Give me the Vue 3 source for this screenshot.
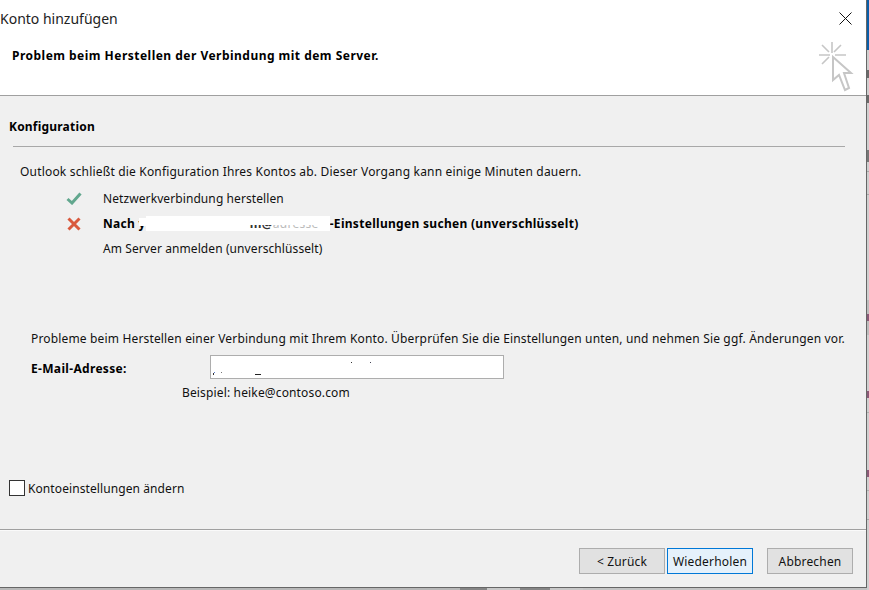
<script setup>
const steps = [
  { id: 'ok', text: 'Netzwerkverbindung herstellen' },
  { id: 'fail' },
  { id: 'none', text: 'Am Server anmelden (unverschlüsselt)' }
]
const backdropMarks = [
  { y: 70, h: 8, c: '#6a6a6a' },
  { y: 95, h: 8, c: '#6a6a6a' },
  { y: 150, h: 12, c: '#777777' },
  { y: 171, h: 1, c: '#a8a8a8' },
  { y: 194, h: 1, c: '#a8a8a8' },
  { y: 314, h: 7, c: '#8a5a78' },
  { y: 391, h: 7, c: '#8a5a78' },
  { y: 412, h: 1, c: '#b0b0b0' },
  { y: 470, h: 7, c: '#8a5a78' },
  { y: 490, h: 1, c: '#b0b0b0' },
  { y: 519, h: 1, c: '#a8a8a8' }
]
</script>

<template>
  <div class="screen">
    <div class="dialog">
      <header class="head">
        <div class="head-text">
          <div class="title">Konto hinzufügen</div>
          <div class="subtitle">Problem beim Herstellen der Verbindung mit dem Server.</div>
        </div>
        <div class="head-icons">
          <svg class="close" width="13" height="13" viewBox="0 0 13 13">
            <path d="M0.5 0.5 L12.5 12.5 M12.5 0.5 L0.5 12.5" stroke="#111" stroke-width="1" fill="none" />
          </svg>
          <svg class="cursor" width="36" height="52" viewBox="818 41 36 52">
            <path d="M832 42V53M819 55H830M835 55H846M822 45L829 52M841 45L834 52M822 64L829 57" stroke="#c6c6c6" stroke-width="1.6" fill="none" />
            <path d="M833 57V80L839 75L845 90L849 88L844 73L851 73Z" stroke="#c6c6c6" stroke-width="2" fill="#fff" stroke-linejoin="miter" />
          </svg>
        </div>
      </header>

      <main class="body">
        <h2 class="section">Konfiguration</h2>
        <div class="rule"></div>
        <p class="intro">Outlook schließt die Konfiguration Ihres Kontos ab. Dieser Vorgang kann einige Minuten dauern.</p>

        <ul class="steps">
          <li v-for="s in steps" :key="s.id" class="step" :class="s.id">
            <span class="step-icon">
              <svg v-if="s.id === 'ok'" width="16" height="13" viewBox="0 0 16 13">
                <path d="M1.5 7 L6 11 L14.5 1.5" stroke="#62a78e" stroke-width="3" fill="none" />
              </svg>
              <svg v-else-if="s.id === 'fail'" class="fail-icon" width="14" height="14" viewBox="0 0 14 14">
                <path d="M1.5 1.5 L12.5 12.5 M12.5 1.5 L1.5 12.5" stroke="#d9593d" stroke-width="3" fill="none" />
              </svg>
            </span>
            <span v-if="s.text" class="step-text">{{ s.text }}</span>
            <span v-else class="step-text strong">Nach <span class="frag">y</span><span class="blank"><span class="remnant">m@</span><span class="remnant faint">adresse</span></span>-Einstellungen suchen (unverschlüsselt)</span>
          </li>
        </ul>

        <p class="problem">Probleme beim Herstellen einer Verbindung mit Ihrem Konto. Überprüfen Sie die Einstellungen unten, und nehmen Sie ggf. Änderungen vor.</p>

        <div class="form-row">
          <label class="form-label">E-Mail-Adresse:</label>
          <div class="input">
            <svg width="292" height="22" viewBox="0 0 292 22">
              <rect x="2" y="17" width="1" height="2" fill="#333" />
              <rect x="3" y="16" width="1" height="1" fill="#5a7fd0" />
              <rect x="10" y="16" width="1" height="1" fill="#777" />
              <rect x="44" y="18" width="6" height="1" fill="#222" />
              <rect x="140" y="6" width="1" height="1" fill="#333" />
              <rect x="159" y="6" width="1" height="1" fill="#445" />
            </svg>
          </div>
        </div>
        <div class="example">Beispiel: heike@contoso.com</div>

        <label class="check-row">
          <span class="check"></span>
          <span class="check-text">Kontoeinstellungen ändern</span>
        </label>

        <div class="foot-rule"></div>
        <footer class="foot">
          <button class="btn">&lt; Zurück</button>
          <button class="btn primary">Wiederholen</button>
          <button class="btn cancel">Abbrechen</button>
        </footer>
      </main>
    </div>

    <div class="side">
      <div class="side-blue"></div>
      <svg class="side-marks" width="2" height="590" viewBox="0 0 2 590">
        <rect x="0" y="300" width="2" height="35" fill="#bdbdbd" />
        <rect v-for="m in backdropMarks" :key="m.y" x="0" :y="m.y" width="2" :height="m.h" :fill="m.c" />
      </svg>
    </div>

    <div class="under">
      <span class="u1"></span><span class="u2"></span><span class="u3"></span><span class="u2 w2"></span><span class="u3"></span>
    </div>
  </div>
</template>

<style scoped>
.screen {
  width: 869px;
  height: 590px;
  overflow: hidden;
  display: grid;
  grid-template-columns: 867px 2px;
  grid-template-rows: 588px 2px;
  background: #cfcfcf;
  font-family: "Noto Sans", "Open Sans", sans-serif;
  font-size: 12px;
  line-height: 16px;
  color: #111;
}
.dialog {
  width: 867px;
  height: 588px;
  box-sizing: border-box;
  border-right: 1px solid #666;
  border-bottom: 1px solid #666;
  display: flex;
  flex-direction: column;
  background: #f0f0f0;
}
.head {
  flex: none;
  height: 96px;
  box-sizing: border-box;
  background: #fff;
  border-bottom: 1px solid #a0a0a0;
  display: flex;
  justify-content: space-between;
}
.title {
  margin-top: 9px;
  font-size: 14px;
  line-height: 20px;
  color: #222;
}
.subtitle {
  margin: 19px 0 0 12px;
  font-weight: 700;
  color: #000;
  letter-spacing: 0.48px;
}
.head-icons {
  width: 48px;
  padding-top: 12px;
  display: flex;
  flex-direction: column;
}
.close {
  margin-left: 21px;
  display: block;
}
.cursor {
  display: block;
  margin-top: 16px;
}
.body {
  flex: 1;
  display: flex;
  flex-direction: column;
  align-items: flex-start;
}
.section {
  margin: 23px 0 0 9px;
  font-size: 12px;
  line-height: 16px;
  font-weight: 700;
  color: #000;
  letter-spacing: 0.2px;
}
.rule {
  width: 832px;
  height: 1px;
  margin: 11px 0 0 13px;
  background: #a8a8a8;
}
.intro {
  margin: 17px 0 0 20px;
  letter-spacing: 0.18px;
}
.steps {
  list-style: none;
  margin: 6px 0 0;
  padding: 0;
}
.step {
  height: 25px;
  display: flex;
  align-items: center;
}
.step-text {
  letter-spacing: 0.09px;
}
.step-icon {
  width: 103px;
  padding-left: 66px;
  box-sizing: border-box;
  flex: none;
  display: flex;
  align-items: center;
}
.fail-icon {
  margin-left: 1px;
}
.strong {
  font-weight: 700;
  color: #000;
  display: flex;
  align-items: center;
  white-space: pre;
  letter-spacing: 0.3px;
}
.frag {
  position: relative;
}
.frag::after {
  content: "";
  position: absolute;
  left: 0;
  right: 0;
  top: 2px;
  height: 8px;
  background: #fff;
}
.blank {
  position: relative;
  display: inline-block;
  width: 184px;
  height: 15px;
  background: #fff;
}
.remnant {
  position: absolute;
  left: 104px;
  top: 0;
  color: #333;
  white-space: nowrap;
}
.faint {
  left: 127px;
  color: #bbb;
  font-weight: 400;
}
.blank::after {
  content: "";
  position: absolute;
  left: 0;
  right: 0;
  top: 0;
  height: 9px;
  background: #fff;
}
.problem {
  margin: 70px 0 0 31px;
  white-space: nowrap;
  letter-spacing: 0.16px;
}
.form-row {
  margin: 8px 0 0 31px;
  display: flex;
  align-items: center;
}
.form-label {
  width: 179px;
  padding-top: 3px;
  font-weight: 700;
  color: #000;
  letter-spacing: 0.33px;
}
.input {
  width: 294px;
  height: 24px;
  box-sizing: border-box;
  border: 1px solid #adadad;
  background: #fff;
}
.input svg {
  display: block;
}
.example {
  margin: 6px 0 0 182px;
  letter-spacing: 0.15px;
}
.check-row {
  margin: 78px 0 0 9px;
  display: flex;
  align-items: center;
  gap: 3px;
}
.check-text {
  padding-top: 2px;
  letter-spacing: 0.09px;
}
.check {
  width: 16px;
  height: 16px;
  box-sizing: border-box;
  border: 1px solid #333;
  background: #fff;
}
.foot-rule {
  align-self: stretch;
  height: 1px;
  margin-top: 32px;
  background: #a0a0a0;
  box-shadow: 0 1px 0 #fafafa;
}
.foot {
  align-self: stretch;
  margin-top: 18px;
  padding-right: 13px;
  display: flex;
  justify-content: flex-end;
  gap: 2px;
}
.btn {
  width: 86px;
  height: 26px;
  padding: 2px 0 0;
  box-sizing: border-box;
  border: 1px solid #adadad;
  background: #e1e1e1;
  font: inherit;
  color: #111;
  letter-spacing: 0.18px;
}
.primary {
  background: #e5f1fb;
  border-color: #0078d7;
}
.cancel {
  margin-left: 12px;
}
.side {
  grid-column: 2;
  grid-row: 1 / 3;
  position: relative;
  width: 2px;
  height: 590px;
}
.side-blue {
  position: absolute;
  left: 0;
  top: 0;
  width: 2px;
  height: 50px;
  background: #0a5ea8;
}
.side-marks {
  display: block;
}
.under {
  grid-column: 1;
  grid-row: 2;
  display: flex;
  height: 2px;
  background: #c4c4c4;
}
.u1 { width: 460px; background: #b8b8b8; }
.u2 { width: 27px; background: #858585; }
.u3 { width: 33px; background: #c8c8c8; }
.w2 { width: 30px; }
</style>
